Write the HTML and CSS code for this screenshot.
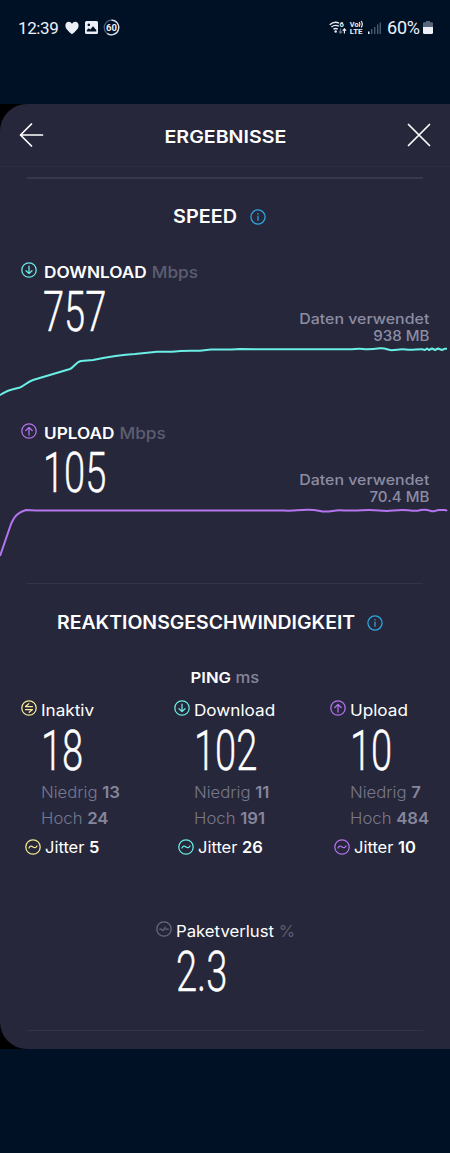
FILE: index.html
```html
<!DOCTYPE html>
<html lang="de">
<head>
<meta charset="utf-8">
<title>Ergebnisse</title>
<link rel="stylesheet" href="styles.css">
</head>
<body>
<svg width="0" height="0" class="defs">
  <defs>
    <symbol id="down" viewBox="0 0 16 16"><circle cx="8" cy="8" r="7.2"/><path d="M8 4v7.500M5 8.700 8 11.600l3-2.900"/></symbol>
    <symbol id="up" viewBox="0 0 16 16"><circle cx="8" cy="8" r="7.200"/><path d="M8 12V4.500M4.800 7.500 8 4.400l3.200 3.100"/></symbol>
    <symbol id="swap" viewBox="0 0 16 16"><circle cx="8" cy="8" r="7.200"/><path d="M11.500 6.500h-7L7.800 3.700M4.500 9.500h7L8.200 12.300"/></symbol>
    <symbol id="wave" viewBox="0 0 16 16"><circle cx="8" cy="8" r="7.200"/><path d="M4 9c1-2.300 2.500-2.100 4-1s3 1 4-1"/></symbol>
    <symbol id="loss" viewBox="0 0 16 16"><circle cx="8" cy="8" r="7.200"/><path d="M3.800 8h1.700l1 1.500M7.700 9.200l1.400-3M9.800 8h2.500"/></symbol>
    <symbol id="info" viewBox="0 0 16 16"><circle cx="8" cy="8" r="7.100"/><path d="M8 7.200v4M8 4.600v.5"/></symbol>
  </defs>
</svg>

<header class="status">
  <span class="time">12:39</span>
  <svg class="heart" width="14" height="14" viewBox="0 0 14 14"><path d="M7 13.300C3.500 10.500.4 8 .4 4.600.4 2.300 1.900.8 3.700.8 5 .8 6.200 1.500 7 2.800 7.800 1.500 9 .8 10.300.8c1.800 0 3.300 1.500 3.300 3.800 0 3.400-3.100 5.900-6.600 8.700z"/></svg>
  <svg class="photo" width="13" height="13" viewBox="0 0 13 13"><path fill-rule="evenodd" d="M1.500 0h10A1.500 1.500 0 0 1 13 1.500v10a1.500 1.500 0 0 1-1.500 1.500h-10A1.500 1.500 0 0 1 0 11.500v-10A1.500 1.500 0 0 1 1.500 0zM1.800 10.500h9.500V9L8 5.300 5.300 8.500 3.800 7.200 1.800 9zM3.800 2.500a1.300 1.300 0 1 0 .01 0z"/></svg>
  <svg class="ring" width="17" height="17" viewBox="0 0 17 17"><circle class="track" cx="8.500" cy="8.500" r="7.300"/><path d="M8.500 1.200a7.300 7.300 0 1 1-4.300 13.200"/><text x="8.500" y="11.900">60</text></svg>
  <svg class="signals" width="52" height="16" viewBox="0 0 52 16">
    <g class="wifi"><path d="M.7 4.700Q5.500.8 10 3.200M2.400 7q3.600-2.700 7.400-.8M4.400 9.300q2.100-1.500 4.300-.2"/></g>
    <circle cx="6.700" cy="11.500" r="1.200"/>
    <text x="10.600" y="7.300" class="tiny">6</text>
    <path class="dim-line" d="M11.500 8.500v4.500M9.900 11.500l1.600 1.700 1.600-1.700"/>
    <path class="line" d="M15.400 13.500V9M13.700 10.700l1.700-1.800 1.700 1.800"/>
    <text x="20.800" y="6.900" class="tiny" textLength="8.800" lengthAdjust="spacingAndGlyphs">Vo</text>
    <path class="line" d="M30.300 2q1.500 2.300 0 4.700M32.200 1q2.200 3.200 0 6.500"/>
    <text x="20.800" y="14" class="lte" textLength="12.700" lengthAdjust="spacingAndGlyphs">LTE</text>
    <path d="M39 11.500h1.500V14H39z"/>
    <path class="bars" d="M42 9h1.400v5H42zM45 7h1.400v7H45zM48 4.500h1.400V14H48zM50.600 2.500h1.400V14h-1.400z"/>
  </svg>
  <span class="percent">60%</span>
  <svg class="battery" width="10" height="13" viewBox="0 0 10 13"><path class="empty" d="M3 0h4v1.200h1.500A1.300 1.300 0 0 1 10 2.500V6H0V2.500a1.300 1.300 0 0 1 1.500-1.300H3z"/><path d="M0 6h10v5.500A1.500 1.500 0 0 1 8.500 13h-7A1.500 1.500 0 0 1 0 11.500z"/></svg>
</header>

<div class="backdrop">
<main class="panel">
  <div class="titlebar">
    <svg width="24" height="26" viewBox="0 0 24 26"><path d="M23.500 13H1.500M12.500 2 1.500 13l11 11"/></svg>
    <h1 class="title">ERGEBNISSE</h1>
    <svg class="close" width="24" height="24" viewBox="0 0 24 24"><path d="m1.500 1.500 21 21m0-21-21 21"/></svg>
  </div>
  <hr class="rule strong">

  <h2 class="heading speed"><span>SPEED</span><svg class="icon blue"><use href="#info"/></svg></h2>

  <section class="transfer">
    <div class="label"><svg class="icon teal"><use href="#down"/></svg><div class="caption"><b>DOWNLOAD</b><span class="unit">Mbps</span></div></div>
    <div class="values"><span class="number">757</span><div class="used"><p>Daten verwendet</p><p class="amount">938 MB</p></div></div>
    <svg class="graph teal" width="450" height="60" viewBox="0 340 450 60"><path d="M0 395C4 393 7 390.500 12 389.500L20 387.500C24 386 27 382 33 380L70 369C74 367 76 362 81 361L93 360C108 357 120 355 135 354L157 351.700H172C181 350.500 191 350.500 200 350.800L211 349.400H232L240 349.100 265 349.300H350C356 349 358 348.300 363 348.900S374 349 380 348.300 388 350.500 393 350.100 400 348.700 406 349.500 416 349.200 422 349.300L425 350 427 348.500 429 350 432 348.500 435 350 438 348.500 442 350 445 348.700 447 348.800"/></svg>
  </section>

  <section class="transfer second">
    <div class="label"><svg class="icon purple"><use href="#up"/></svg><div class="caption"><b>UPLOAD</b><span class="unit">Mbps</span></div></div>
    <div class="values"><span class="number">105</span><div class="used"><p>Daten verwendet</p><p class="amount">70.4 MB</p></div></div>
    <svg class="graph purple" width="450" height="60" viewBox="0 501 450 60"><path d="M0 556 10 527C14 515 19 512 26 510L36 510.500H275C285 510.500 291 511 297 510.300S312 509 320 511 333 510 340 510.200 352 511 362 510.200 376 510.200 384 510.800 397 509 408 510.200 416 511 421 510 427 509.500 431 511 435 509.700 440 510 446 509.500 447 511"/></svg>
  </section>

  <hr class="rule">
  <h2 class="heading reaction"><span>REAKTIONSGESCHWINDIGKEIT</span><svg class="icon blue"><use href="#info"/></svg></h2>
  <h3 class="ping"><b>PING</b><span>ms</span></h3>

  <section class="latency">
    <article>
      <div class="state"><svg class="icon yellow"><use href="#swap"/></svg><span>Inaktiv</span></div>
      <div class="number">18</div>
      <p>Niedrig <b>13</b></p><p>Hoch <b>24</b></p>
      <div class="jitter"><svg class="icon yellow"><use href="#wave"/></svg><span>Jitter <b>5</b></span></div>
    </article>
    <article>
      <div class="state"><svg class="icon teal"><use href="#down"/></svg><span>Download</span></div>
      <div class="number">102</div>
      <p>Niedrig <b>11</b></p><p>Hoch <b>191</b></p>
      <div class="jitter"><svg class="icon teal"><use href="#wave"/></svg><span>Jitter <b>26</b></span></div>
    </article>
    <article>
      <div class="state"><svg class="icon purple"><use href="#up"/></svg><span>Upload</span></div>
      <div class="number">10</div>
      <p>Niedrig <b>7</b></p><p>Hoch <b>484</b></p>
      <div class="jitter"><svg class="icon purple"><use href="#wave"/></svg><span>Jitter <b>10</b></span></div>
    </article>
  </section>

  <section class="packet">
    <div class="state"><svg class="icon gray"><use href="#loss"/></svg><span>Paketverlust <i>%</i></span></div>
    <div class="number">2.3</div>
  </section>
  <hr class="rule">
</main>
</div>
</body>
</html>
```
FILE: styles.css
```css
* { box-sizing: border-box; }
body { margin: 0; height: 1153px; background: #001126; color: #fff; font-family: Inter, "Open Sans", sans-serif; overflow: hidden; }
.defs { display: block; height: 0; }
h1, h2, h3, p { margin: 0; font-weight: 400; }
svg { display: block; flex: none; overflow: visible; }

.status { height: 104px; padding: 18px 17px 0 18px; display: flex; align-items: flex-start; color: #edf2fb; font: 400 16.500px/20px Roboto, sans-serif; }
.status svg { fill: #eceff5; }
.time { width: 40px; font-size: 17px; letter-spacing: -.4px; white-space: nowrap; }
.heart { margin: 3px 0 0 7px; }
.photo { margin: 3px 0 0 6px; }
.ring { margin: 1px 0 0 5px; }
.ring circle, .ring path { fill: none; stroke: #dce2ec; stroke-width: 1.200; }
.ring .track { stroke: #53617a; }
.ring text { font: 700 9.500px Roboto, sans-serif; text-anchor: middle; }
.signals { margin: 2px 0 0 auto; }
.wifi path { fill: none; stroke: #eceff5; stroke-width: 1.400; }
.signals .line { fill: none; stroke: #eceff5; stroke-width: 1.200; }
.signals .dim-line { fill: none; stroke: #65738a; stroke-width: 1.200; }
.signals .bars { fill: #4a586d; }
.tiny { font: 700 7.500px Roboto, sans-serif; }
.lte { font: 700 8px Roboto, sans-serif; }
.percent { margin-left: 6px; width: 35px; font-size: 18px; letter-spacing: -.2px; }
.battery { margin: 3px 0 0 1px; }
.battery .empty { fill: #59657a; }

.backdrop { background: #000; }
.panel { height: 945px; background: #26273b; border-radius: 27px 0 0 27px; }
.titlebar { height: 63px; padding: 0 19px; display: flex; align-items: center; justify-content: space-between; border-bottom: 1px solid #2c2e42; }
.titlebar svg { fill: none; stroke: #fff; stroke-width: 1.700; stroke-linecap: round; stroke-linejoin: round; }
.title { margin-top: 3px; font-size: 17.500px; font-weight: 600; line-height: 24px; transform: scaleX(1.12); }
.rule { border: 0; height: 1px; margin: 0 27px; background: #323449; }
.strong { height: 2px; margin-top: 10px; background: #36384d; }

.heading { display: flex; align-items: center; justify-content: center; height: 24px; margin-top: 26px; font-size: 18px; font-weight: 600; line-height: 24px; }
.heading span { transform: scaleX(1.1); }
.speed { gap: 15.5px; padding-right: 7.5px; }
.icon { width: 16px; height: 16px; fill: none; stroke: currentColor; stroke-width: 1.250; stroke-linecap: round; stroke-linejoin: round; }
.blue { color: #2fa6e0; }
.teal { color: #6aeee5; }
.purple { color: #b574f0; }
.yellow { color: #f8eb91; }
.gray { color: #6a6b7d; }

.transfer { margin-top: 33px; height: 139px; }
.second { margin: 22px 0 43px; height: 117px; }
.label { display: flex; height: 22px; padding-left: 21px; font-size: 15.500px; line-height: 22px; }
.caption { margin-left: 6.5px; transform: scaleX(1.11); transform-origin: left; }
.caption b { font-weight: 600; }
.unit { margin-left: 4.5px; color: #5d5e71; font-weight: 500; }
.values { height: 56px; display: flex; justify-content: space-between; padding: 0 21px 0 43px; }
.number { display: block; width: max-content; transform: scaleX(.68); transform-origin: left; font: 300 56px/56px Roboto, sans-serif; -webkit-text-stroke: .4px #fff; }
.used { margin-top: 25.5px; color: #8c8da3; font-size: 14.500px; line-height: 17.500px; text-align: right; }
.used p { font-weight: 500; transform: scaleX(1.1); transform-origin: right; }
.used .amount { transform: scaleX(1.04); }
.graph path { fill: none; stroke: currentColor; stroke-width: 2; stroke-linejoin: round; }

.reaction { margin-top: 27px; gap: 23px; padding-left: 1px; }
.reaction span { transform: scaleX(1.08); }
.ping { display: flex; gap: 4px; width: max-content; margin: 32px auto 0; height: 22px; font-size: 15px; line-height: 22px; transform: scaleX(1.11); }
.ping b { font-weight: 600; }
.ping span { color: #85869b; font-weight: 500; }
.latency { display: grid; grid-template-columns: 153px 156px 1fr; margin-top: 10px; padding-left: 21px; }
.state { display: flex; gap: 4px; height: 23.5px; font-size: 16px; line-height: 22px; }
.state .icon { margin-top: 1px; }
.state span { transform: scaleX(1.07); transform-origin: left; }
.packet .state span { transform: scaleX(1.045); }
.state i { font-style: normal; color: #5d5e71; }
.latency .number { margin-left: 20px; }
.packet .number { margin-left: 20px; }
.latency p { margin-left: 20px; height: 26px; width: max-content; line-height: 26px; color: #77788c; font-size: 16px; font-weight: 300; transform: scaleX(1.045); transform-origin: left; }
.latency p b { color: #85869b; font-weight: 600; }
.jitter { display: flex; align-items: center; gap: 4px; margin: 4.5px 0 0 4px; height: 24px; font-size: 16px; line-height: 24px; }
.jitter span { transform: scaleX(1.03); transform-origin: left; }
.jitter b { font-weight: 600; }
.packet { margin: 61px 0 30px 156px; }
```
